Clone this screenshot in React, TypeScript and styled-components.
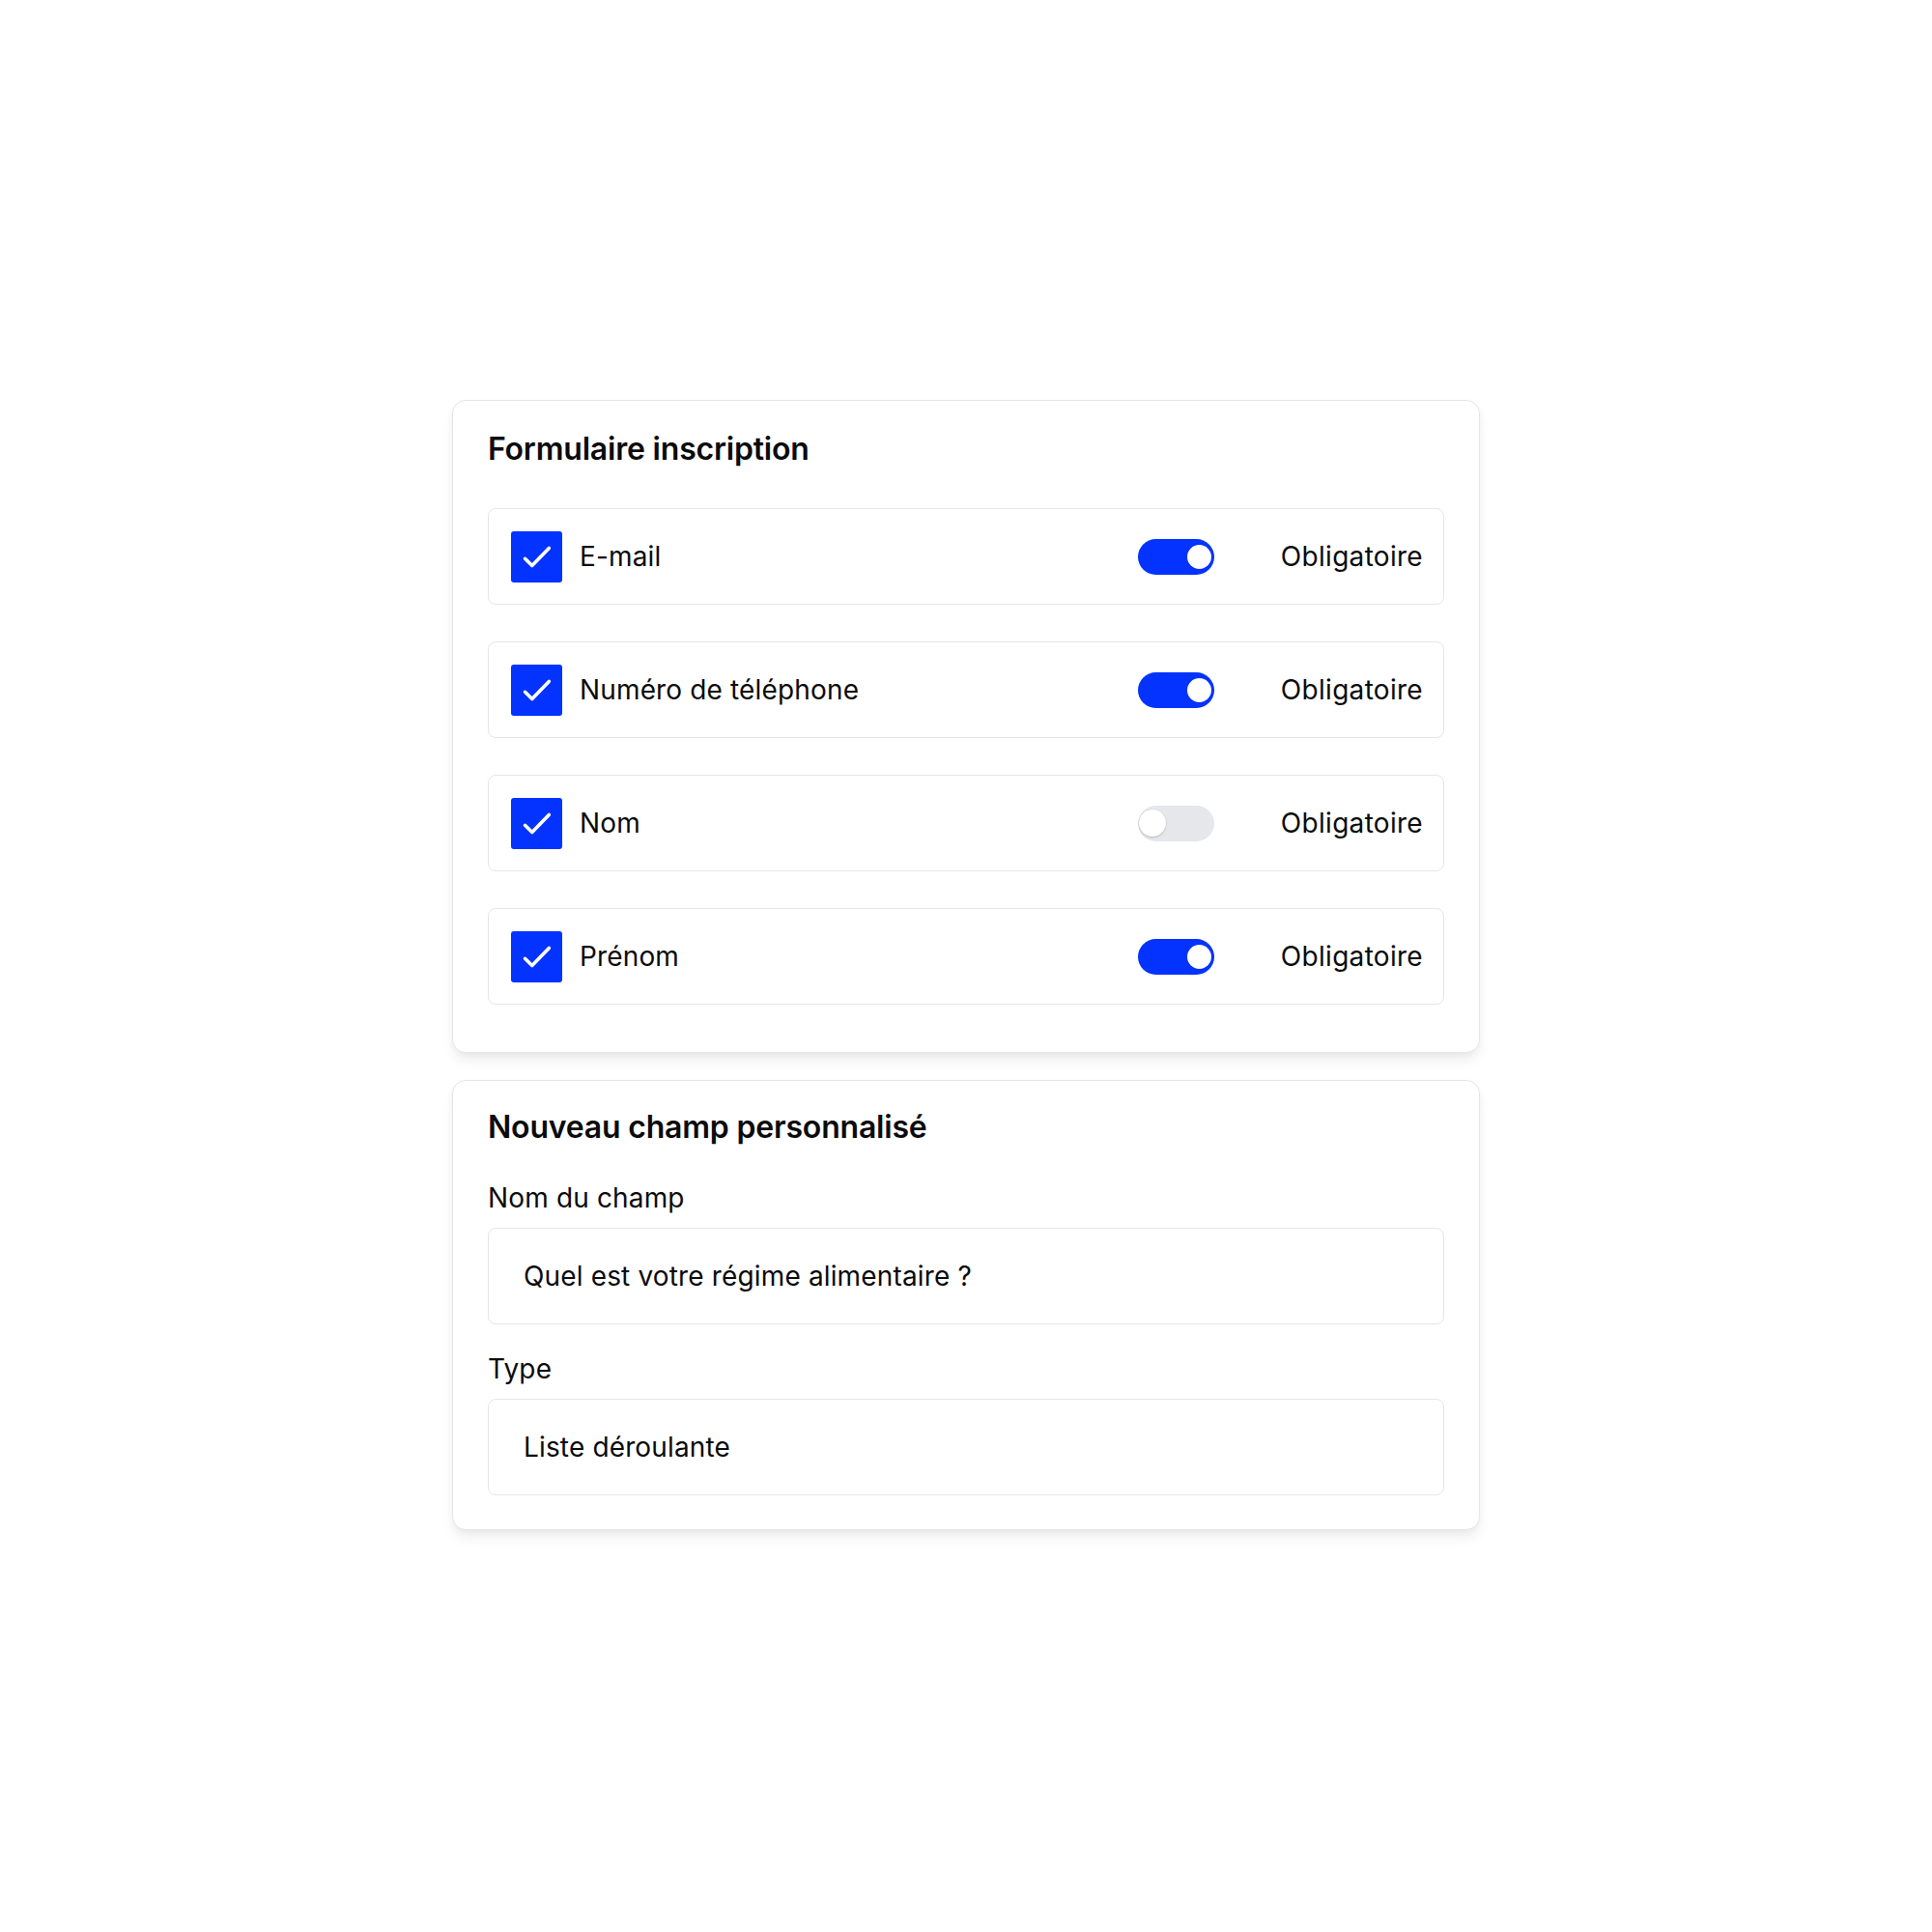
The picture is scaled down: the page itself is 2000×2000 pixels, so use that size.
import React from "react";
import styled, { createGlobalStyle } from "styled-components";

const GlobalStyle = createGlobalStyle`
  *, *::before, *::after { box-sizing: border-box; }
  html, body { margin: 0; padding: 0; background: #ffffff; }
  body {
    font-family: Inter, "Noto Sans", "Liberation Sans", sans-serif;
    color: #0b0b0c;
    -webkit-font-smoothing: antialiased;
  }
`;

const BLUE = "#0433ff";
const BORDER = "#e4e6ea";

const Page = styled.main`
  min-height: 2000px;
  width: 2000px;
  display: flex;
  flex-direction: column;
  align-items: center;
  justify-content: center;
  gap: 28px;
  padding-bottom: 2px;
`;

const Card = styled.section<{ $top: number; $bottom: number }>`
  width: 1064px;
  background: #ffffff;
  border: 1px solid ${BORDER};
  border-radius: 14px;
  padding: ${(p) => p.$top}px 36px ${(p) => p.$bottom}px 36px;
  box-shadow: 0 9px 14px -2px rgba(0, 0, 0, 0.075), 0 2px 6px rgba(0, 0, 0, 0.035);
  display: flex;
  flex-direction: column;
`;

const CardTitle = styled.h2`
  margin: 0;
  font-size: 32px;
  line-height: 36px;
  font-weight: 600;
  letter-spacing: -0.2px;
  color: #0b0b0c;
`;

const FieldList = styled.div`
  margin-top: 43px;
  display: flex;
  flex-direction: column;
  gap: 38px;
`;

const FieldRow = styled.div`
  height: 100px;
  border: 1.5px solid ${BORDER};
  border-radius: 8px;
  display: flex;
  align-items: center;
  padding: 0 21px 0 23px;
`;

const CheckBox = styled.span`
  width: 53px;
  height: 53px;
  border-radius: 3px;
  background: ${BLUE};
  display: flex;
  align-items: center;
  justify-content: center;
  flex-shrink: 0;
`;

const FieldName = styled.span`
  flex: 1;
  margin-left: 18px;
  font-size: 28px;
  line-height: 34px;
  font-weight: 400;
  letter-spacing: 0.15px;
`;

const Toggle = styled.span<{ $on: boolean }>`
  width: 79px;
  height: 37px;
  border-radius: 19px;
  background: ${(p) => (p.$on ? BLUE : "#e5e7eb")};
  display: flex;
  align-items: center;
  justify-content: ${(p) => (p.$on ? "flex-end" : "flex-start")};
  padding: ${(p) => (p.$on ? "0 3px 0 0" : "0 0 0 1px")};
  flex-shrink: 0;
`;

const Knob = styled.span<{ $on: boolean }>`
  width: ${(p) => (p.$on ? 25 : 28)}px;
  height: ${(p) => (p.$on ? 25 : 28)}px;
  border-radius: 50%;
  background: #ffffff;
  box-shadow: ${(p) => (p.$on ? "none" : "0 1px 2px rgba(0,0,0,0.18), 0 0 0 0.5px rgba(0,0,0,0.06)")};
`;

const RequiredText = styled.span`
  margin-left: 69px;
  font-size: 28px;
  line-height: 34px;
  font-weight: 400;
  letter-spacing: 0.3px;
`;

const FieldGroup = styled.div`
  display: flex;
  flex-direction: column;
  gap: 14px;
  margin-top: 38px;
  & + & {
    margin-top: 29px;
  }
`;

const FieldLabel = styled.label`
  font-size: 28px;
  line-height: 34px;
  font-weight: 400;
  letter-spacing: 0.15px;
`;

const InputBox = styled.div`
  height: 100px;
  border: 1.5px solid ${BORDER};
  border-radius: 8px;
  display: flex;
  align-items: center;
  padding: 0 36px;
  font-size: 28px;
  line-height: 34px;
  letter-spacing: 0.15px;
`;

const CheckIcon = () => (
  <svg width="53" height="53" viewBox="0 0 53 53" aria-hidden="true">
    <polyline
      points="14.5,28.3 21.8,35.6 39.3,17.4"
      fill="none"
      stroke="#ffffff"
      strokeWidth="3.6"
      strokeLinecap="round"
      strokeLinejoin="round"
    />
  </svg>
);

const fields = [
  { name: "E-mail", required: true },
  { name: "Numéro de téléphone", required: true },
  { name: "Nom", required: false },
  { name: "Prénom", required: true },
];

export default function App() {
  return (
    <>
      <GlobalStyle />
      <Page>
        <Card $top={32} $bottom={49}>
          <CardTitle>Formulaire inscription</CardTitle>
          <FieldList>
            {fields.map((f) => (
              <FieldRow key={f.name}>
                <CheckBox>
                  <CheckIcon />
                </CheckBox>
                <FieldName>{f.name}</FieldName>
                <Toggle $on={f.required}>
                  <Knob $on={f.required} />
                </Toggle>
                <RequiredText>Obligatoire</RequiredText>
              </FieldRow>
            ))}
          </FieldList>
        </Card>
        <Card $top={30} $bottom={35}>
          <CardTitle>Nouveau champ personnalisé</CardTitle>
          <FieldGroup>
            <FieldLabel>Nom du champ</FieldLabel>
            <InputBox>Quel est votre régime alimentaire ?</InputBox>
          </FieldGroup>
          <FieldGroup>
            <FieldLabel>Type</FieldLabel>
            <InputBox>Liste déroulante</InputBox>
          </FieldGroup>
        </Card>
      </Page>
    </>
  );
}
